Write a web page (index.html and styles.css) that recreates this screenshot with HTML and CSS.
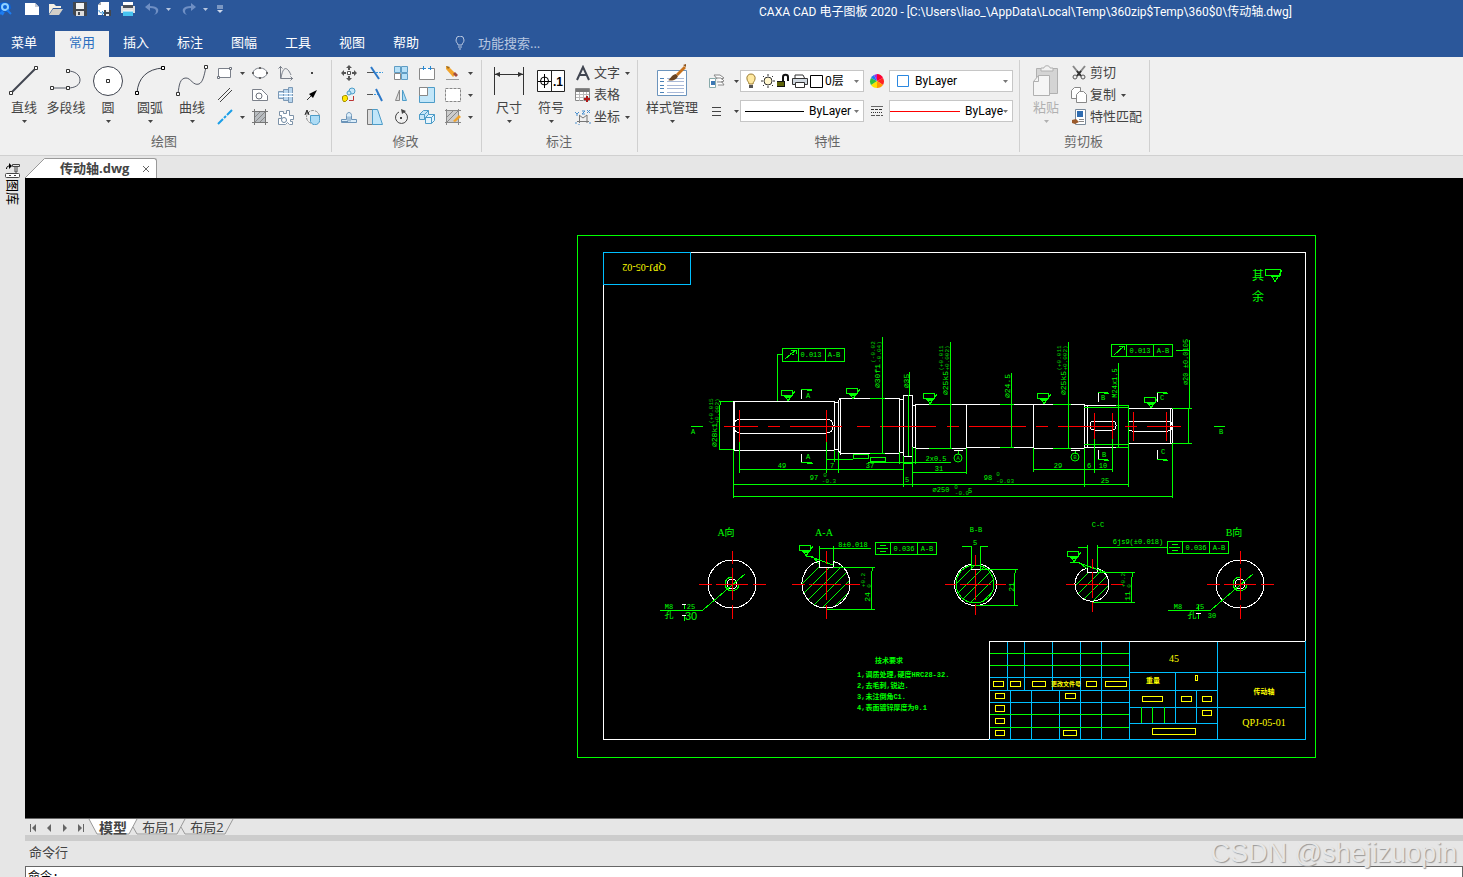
FILE: index.html
```
<!DOCTYPE html>
<html lang="zh-CN">
<head>
<meta charset="utf-8">
<title>CAXA CAD 电子图板 2020</title>
<link rel="stylesheet" href="styles.css">
</head>
<body>
<svg class="defs" aria-hidden="true">
	<symbol id="down" viewBox="0 0 5 3"><path d="M0 0h5L2.5 3z" fill="currentColor"/></symbol>
	<symbol id="rough" viewBox="0 0 16 13" overflow="visible"><path d="M0 0h11v5h-11zM3 6h8M4 6l3 5 7-10M5 7h5" fill="none" stroke="#0f0"/></symbol>
	<pattern id="hatch" width="11" height="11" patternUnits="userSpaceOnUse"><path d="M-1 12L12-1" stroke="#0f0" shape-rendering="crispEdges"/></pattern>
</svg>

<header class="top">
	<div class="titlebar">
		<div class="quick">
			<svg class="logo" width="12" height="16" viewBox="4 0 12 16"><path d="M4 2l5-1 5 2 1 4-2 3-3 1-3-1-3 2z" fill="#0b62d8"/><circle cx="9" cy="6" r="3" fill="none" stroke="#8fd0ff" stroke-width="2"/><path d="M11 9l4 4M4 13l3-3M6 14l2-3" stroke="#1c7cf0" stroke-width="2"/></svg>
			<button aria-label="新建"><svg width="16" height="16"><path d="M1 2h10l4 4v8H1z" fill="#fff"/><path d="M11 2v4h4z" fill="#c8ccd4"/></svg></button>
			<button aria-label="打开"><svg width="16" height="16"><path d="M1 13V3h5l2 2h5v2H5z" fill="#f4efe4"/><path d="M1 14l4-6h10l-4 6z" fill="#d2cfc8"/></svg></button>
			<button aria-label="保存"><svg width="16" height="16"><path d="M1 1h14v14H3l-2-2z" fill="#42474f"/><path d="M4 2h8v6H4z" fill="#f2f2f2"/><path d="M4 10h8v5H4z" fill="#ddd"/><path d="M6 11h2v3H6z" fill="#42474f"/></svg></button>
			<button aria-label="另存为"><svg width="16" height="16"><path d="M2 4l3-3h8v13H2z" fill="#fff"/><path d="M2 4h3V1z" fill="#aaa"/><path d="M3 9c0 3 2 3 5 3M6 10l2 2-2 2" fill="none" stroke="#2f8bd0"/><path d="M8 9h7v6H8z" fill="#42474f"/><path d="M10 9h3v2h-3zM10 13h3v2h-3z" fill="#eee"/></svg></button>
			<button aria-label="打印"><svg width="16" height="16"><path d="M3 1h10v5H3z" fill="#fff"/><path d="M1 5h14v7H1z" fill="#e0e0e0"/><path d="M3 4h10v3H3z" fill="#4b5058"/><path d="M3 10h10v5H3z" fill="#48c3f0"/><path d="M3 10h10" stroke="#fff"/></svg></button>
			<button class="dim" aria-label="撤销"><svg width="16" height="16"><path d="M6 2L1 6l5 4V7c4 0 6 1 6 3s-1 3-2 4c3-1 5-3 4-6-1-2-4-3-8-3z" fill="currentColor"/></svg></button>
			<svg class="arr" width="5" height="3"><use href="#down"/></svg>
			<button class="dim" aria-label="重做"><svg width="16" height="16"><path d="M10 2l5 4-5 4V7c-4 0-6 1-6 3s1 3 2 4c-3-1-5-3-4-6 1-2 4-3 8-3z" fill="currentColor"/></svg></button>
			<svg class="arr" width="5" height="3"><use href="#down"/></svg>
			<svg class="custom" width="6" height="8"><path d="M0 1h6M0 3h6" stroke="#cdd8ea"/><path d="M0 5h6L3 8z" fill="#cdd8ea"/></svg>
		</div>
		<h1>CAXA CAD 电子图板 2020 - [C:\Users\liao_\AppData\Local\Temp\360zip$Temp\360$0\传动轴.dwg]</h1>
	</div>
	<nav class="menu">
		<a class="first" href="#">菜单</a>
		<a class="select" href="#">常用</a>
		<a href="#">插入</a>
		<a href="#">标注</a>
		<a href="#">图幅</a>
		<a href="#">工具</a>
		<a href="#">视图</a>
		<a href="#">帮助</a>
		<label class="search">
			<svg width="10" height="14"><path d="M3 9c0-2-2-2-2-5a4 4 0 0 1 8 0c0 3-2 3-2 5zM3 11h4M4 13h2" fill="none" stroke="#b8c7e0"/></svg>
			<input type="text" placeholder="功能搜索..." aria-label="功能搜索">
		</label>
	</nav>
</header>

<div class="ribbon">
	<!-- 绘图 -->
	<section class="group draw">
		<div class="tools">
			<button class="big"><svg width="32" height="34"><path d="M3 29L28 4" stroke="#404550" stroke-width="2"/><path d="M1.500 27.500h3v3h-3zM26.500 2.500h3v3h-3z" fill="#fff" stroke="#333"/></svg><span>直线</span><svg class="arr" width="5" height="3"><use href="#down"/></svg></button>
			<button class="big"><svg width="32" height="34"><path d="M2 24h16c7 0 12-3 12-8s-5-9-12-9" fill="none" stroke="#555a66"/><path d="M.5 22.500h3v3h-3zM16.500 22.500h3v3h-3zM16.500 5.500h3v3h-3z" fill="#fff" stroke="#333"/></svg><span>多段线</span></button>
			<button class="big"><svg width="32" height="34"><circle cx="16" cy="17" r="14.500" fill="#fff" stroke="#404550"/><path d="M14.500 15.500h3v3h-3z" fill="#fff" stroke="#333"/></svg><span>圆</span><svg class="arr" width="5" height="3"><use href="#down"/></svg></button>
			<button class="big"><svg width="32" height="34"><path d="M3 29C4 14 13 5 29 4" fill="none" stroke="#404550"/><path d="M1.500 27.500h3v3h-3zM27.500 2.500h3v3h-3z" fill="#fff" stroke="#000"/></svg><span>圆弧</span><svg class="arr" width="5" height="3"><use href="#down"/></svg></button>
			<button class="big"><svg width="32" height="34"><path d="M2 30c1-9 2-16 8-16 5 0 7 8 13 6 4-2 5-8 7-17" fill="none" stroke="#555a66"/><path d="M.5 28.500h3v3h-3zM28.500 1.500h3v3h-3z" fill="#fff" stroke="#333"/></svg><span>曲线</span><svg class="arr" width="5" height="3"><use href="#down"/></svg></button>
			<div class="small-grid">
				<button aria-label="矩形"><svg width="16" height="16"><path d="M1.500 3.500h12v9h-12z" fill="#fff" stroke="#7b808a"/><path d="M.5 11.500h2v2h-2zM12.500 2.500h2v2h-2z" fill="#fff" stroke="#6b707a"/></svg></button>
				<svg class="arr" width="5" height="3"><use href="#down"/></svg>
				<button aria-label="椭圆"><svg width="16" height="16"><ellipse cx="8" cy="8" rx="7" ry="5" fill="#fff" stroke="#7b808a"/><path d="M0 7h2v2H0zM14 7h2v2h-2zM7 2h2v2H7zM7 12h2v2H7z" fill="#666"/></svg></button>
				<button aria-label="公式曲线"><svg width="16" height="16"><path d="M2.500 1v12.500H15M.5 3.500l2-2 2 2M12.500 11.500l2 2-2 2M3 13C5 1 9 1 13 10" fill="none" stroke="#7b808a"/></svg></button>
				<button aria-label="点"><svg width="16" height="16"><path d="M7 7h2v2H7z" fill="#444"/></svg></button>

				<button aria-label="平行线"><svg width="16" height="16"><path d="M1 13L13 1M3 15L15 3" stroke="#444"/></svg></button>
				<i></i>
				<button aria-label="孔"><svg width="16" height="16"><path d="M.5 2.500h9l6 6v5H.5z" fill="#fff" stroke="#7b808a"/><circle cx="7" cy="9" r="3" fill="#fff" stroke="#6b707a"/></svg></button>
				<button aria-label="轴"><svg width="16" height="16"><path d="M.5 4.500h5v7h-5zM5.500 2.500h5v11h-5zM10.500 .5h4v15h-4z" fill="#b9d6ee" stroke="#7b98b5"/><path d="M1 6.500h14M1 9.500h14" stroke="#fff"/></svg></button>
				<button aria-label="箭头"><svg width="16" height="16"><path d="M3 13l5-5" stroke="#333"/><path d="M13 3L5 7l4 4z" fill="#000"/></svg></button>

				<button aria-label="中心线"><svg width="16" height="16"><path d="M1 15l5-5M7 9l2-2M10 6l5-5" stroke="#1b9fe8" stroke-width="2"/></svg></button>
				<svg class="arr" width="5" height="3"><use href="#down"/></svg>
				<button aria-label="剖面线"><svg width="16" height="16"><path d="M2.500 2.500h11v11h-11z" fill="#b8bcc0"/><path d="M2.500 0v16M13.500 0v16M0 2.500h16M0 13.500h16" stroke="#777"/><path d="M3 8l5-5M3 13L13 3M8 13l5-5" stroke="#888"/></svg></button>
				<button aria-label="齿轮"><svg width="16" height="16"><path d="M1.500 6.500v-4h4v2h3v-3h3v5h4v4h-3v2h2v3h-3l-2-2-2 2h-7v-6h3v-3z" fill="#fff" stroke="#7d92a8"/><circle cx="6" cy="11" r="2.500" fill="#fff" stroke="#6d87a0"/></svg></button>
				<button aria-label="局部放大"><svg width="16" height="16"><circle cx="9" cy="8" r="6.500" fill="none" stroke="#888" stroke-dasharray="3 1"/><path d="M6.500 6.500h9v3a4 4 0 0 1-9 3z" fill="#aedcf5" stroke="#4d9cc8"/><path d="M1 6l2-5 2 5M2 4h3" fill="none" stroke="#222"/></svg></button>
			</div>
		</div>
		<h2>绘图</h2>
	</section>

	<!-- 修改 -->
	<section class="group modify">
		<div class="tools">
			<div class="small-grid">
				<button aria-label="平移"><svg width="16" height="16"><path d="M6.500 6.500h3v3h-3z" fill="#fff" stroke="#555"/><path d="M7 2h2v3H7zM7 11h2v3H7zM2 7h3v2H2zM11 7h3v2h-3z" fill="#555"/><path d="M5 3l3-3 3 3zM5 13l3 3 3-3zM3 5L0 8l3 3zM13 5l3 3-3 3z" fill="#555"/></svg></button>
				<button aria-label="裁剪"><svg width="16" height="16"><path d="M0 7.500h8" stroke="#555"/><path d="M9 7.500h7" stroke="#3c9be0" stroke-dasharray="2 1"/><path d="M4 2l8 12" stroke="#2b78c8" stroke-width="2"/></svg></button>
				<button aria-label="阵列"><svg width="16" height="16"><path d="M1.500 1.500h6v6h-6zM8.500 1.500h6v6h-6zM8.500 8.500h6v6h-6z" fill="#b7e0f7" stroke="#5f9dc4"/><path d="M1.500 8.500h6v6h-6z" fill="#fff" stroke="#888"/></svg></button>
				<button aria-label="打断"><svg width="16" height="16"><path d="M5 3.500H.5v11h15v-11H11" fill="#fff" stroke="#888"/><path d="M4.500 1v4M11.500 1v4M3 3.500h4M9 3.500h4" stroke="#2b88d0"/></svg></button>
				<button aria-label="删除"><svg width="16" height="16"><path d="M1 1l3 1 7 7-3 3-7-8z" fill="#f2a42c"/><path d="M8 9l3 3 2-2-3-3z" fill="#a44b3c"/><path d="M1 1l2 3 2-2z" fill="#9a6a20"/><path d="M1 14.500h13" stroke="#999"/></svg></button>
				<svg class="arr" width="5" height="3"><use href="#down"/></svg>

				<button aria-label="平移复制"><svg width="16" height="16"><circle cx="11" cy="4" r="3" fill="#c7e6f8" stroke="#4a9cc8"/><circle cx="8" cy="6" r="2" fill="#c7e6f8" stroke="#4a9cc8"/><path d="M1.500 9.500l2-1h2l1 2v2l-2 2h-2l-1-2z" fill="#ffe800" stroke="#a08a00"/><path d="M8 13.500h4.500V9" fill="none" stroke="#b33"/></svg></button>
				<button aria-label="延伸"><svg width="16" height="16"><path d="M0 7.500h6" stroke="#555"/><path d="M7 7.500h5" stroke="#3c9be0" stroke-dasharray="2 1"/><path d="M9 2l6 12" stroke="#2b78c8" stroke-width="2"/></svg></button>
				<button aria-label="镜像"><svg width="16" height="16"><path d="M6.500 3v10.500h-4z" fill="#ddd" stroke="#888"/><path d="M9.500 3v10.500h4z" fill="#aedcf5" stroke="#4d9cc8"/></svg></button>
				<button aria-label="缩放"><svg width="16" height="16"><path d="M.5 .5h15v15H.5z" fill="#c2e6f9" stroke="#4d9cc8"/><path d="M.5 .5h8v8h-8z" fill="#fff" stroke="#888"/></svg></button>
				<button aria-label="拉伸"><svg width="16" height="16"><path d="M.5 1.500h15v13H.5z" fill="#fff" stroke="#888" stroke-dasharray="3 1"/></svg></button>
				<svg class="arr" width="5" height="3"><use href="#down"/></svg>

				<button aria-label="偏移"><svg width="16" height="16"><path d="M.5 13.500h15v-3h-5v-4c0-4-5-4-5 0v4h-5z" fill="#dceefa" stroke="#6c94b8"/><path d="M1 12.500h6v-5M9 7.500v5" fill="none" stroke="#6c94b8"/></svg></button>
				<button aria-label="拔模"><svg width="16" height="16"><path d="M.5 .5h9v15h-9z" fill="#ddd" stroke="#777"/><path d="M5.500 .5h5l5 15h-10z" fill="#c2e6f9" stroke="#4d9cc8"/></svg></button>
				<button aria-label="旋转"><svg width="16" height="16"><path d="M6 3a6 6 0 1 0 5 0" fill="none" stroke="#444"/><path d="M8 0l5 2-4 3z" fill="#444"/><path d="M7 8h2v2H7z" fill="#444"/></svg></button>
				<button aria-label="分解"><svg width="16" height="16"><path d="M.5 5.500l4-4h5v4l-4 5h-5zM.5 5.500h5v5M5.500 5.500l4-4" fill="#c7e6f8" stroke="#4d9cc8"/><path d="M6.500 8.500l3-3h6v6l-3 3h-6zM6.500 8.500h6v6M12.500 8.500l3-3" fill="#e4f4fd" stroke="#4d9cc8"/></svg></button>
				<button aria-label="编辑"><svg width="16" height="16"><path d="M1.500 1.500h12v12h-12z" fill="#ccc" stroke="#888"/><path d="M0 1.500h16M0 13.500h16M1.500 0v16M13.500 0v16M2 8l6-6M2 13L13 2" stroke="#888"/><path d="M8 12l6-6 2 2-6 5z" fill="#f0a32c"/></svg></button>
				<svg class="arr" width="5" height="3"><use href="#down"/></svg>
			</div>
		</div>
		<h2>修改</h2>
	</section>

	<!-- 标注 -->
	<section class="group note">
		<div class="tools">
			<button class="big"><svg width="32" height="34"><path d="M1.500 3v28M30.500 3v28M2 10.500h28" stroke="#333"/><path d="M2 10l5-2v5zM30 10l-5-2v5z" fill="#333"/></svg><span>尺寸</span><svg class="arr" width="5" height="3"><use href="#down"/></svg></button>
			<button class="big"><svg width="32" height="34"><path d="M2.500 6.500h27v21h-27zM16.500 7v20" fill="#fff" stroke="#222"/><circle cx="9.500" cy="17" r="4" fill="none" stroke="#000"/><path d="M3 17.500h13M9.500 10v14" stroke="#000"/><text class="sym" x="18" y="22">.1</text></svg><span>符号</span><svg class="arr" width="5" height="3"><use href="#down"/></svg></button>
			<div class="rows">
				<button class="row"><svg width="16" height="16"><path d="M2 15L8 2l6 13M5 10h6" fill="none" stroke="#404550" stroke-width="2"/></svg><span>文字</span><svg class="arr" width="5" height="3"><use href="#down"/></svg></button>
				<button class="row"><svg width="16" height="16"><path d="M.5 1.500h14v12H.5z" fill="#fff" stroke="#888"/><path d="M1 2h13v3H1z" fill="#777"/><path d="M1 7.500h13M1 10.500h13M4.500 5v9M8.500 5v9M11.500 5v9" stroke="#bbb"/><path d="M12 9v6M9 12h6" stroke="#b01818" stroke-width="2"/></svg><span>表格</span></button>
				<button class="row"><svg width="16" height="16"><path d="M4.500 6v8M2 12.500h12M4 6l4 3 4-3v8" fill="none" stroke="#777"/><path d="M0 3l2 2 2-2M2 5v2M7 2h3L7 5h3M12 1l3 3M15 1l-3 3M0 14h2M14 14h2M4 15v1" fill="none" stroke="#4a90d0"/></svg><span>坐标</span><svg class="arr" width="5" height="3"><use href="#down"/></svg></button>
			</div>
		</div>
		<h2>标注</h2>
	</section>

	<!-- 特性 -->
	<section class="group prop">
		<div class="tools">
			<button class="big wide"><svg width="32" height="34"><path d="M1.500 6.500h29v25h-29z" fill="#fff" stroke="#6c94bd"/><path d="M4 14.500h4M4 17.500h4M4 21.500h4M4 24.500h4M4 28.500h4" stroke="#4c83b8"/><path d="M11 14.500h17M11 17.500h17M11 21.500h17M11 24.500h17M11 28.500h17" stroke="#a9b9d8"/><path d="M12 16c2 0 3-5 8-6l2 2c-2 5-7 5-10 4z" fill="#6b4523"/><path d="M20 10l8-8 2 2-8 8z" fill="#c8721c"/><path d="M27 1l3-1v3z" fill="#8a5018"/></svg><span>样式管理</span><svg class="arr" width="5" height="3"><use href="#down"/></svg></button>
			<div class="props">
				<button aria-label="图层"><svg width="16" height="16"><path d="M.5 5.500h6v9h-6z" fill="#fff" stroke="#8aa"/><path d="M2 8h4v4H2z" fill="#3c78b4"/><path d="M5 2h6l4 3-3 1M7 5h5l3 3-3 1M8 9h5l2 3H9M5 2l3 4" fill="#fff" stroke="#888"/></svg></button>
				<svg class="arr" width="5" height="3"><use href="#down"/></svg>
				<div class="combo layer">
					<svg width="80" height="18" viewBox="0 0 80 18"><path d="M6 2a4 4 0 0 0-4 5c0 2 2 3 2 5h4c0-2 2-3 2-5a4 4 0 0 0-4-5z" fill="#ffe9a0" stroke="#9a7a30"/><path d="M4 13h4v3H4z" fill="#555"/><circle cx="23" cy="9" r="4" fill="#fff6cc" stroke="#333"/><path d="M23 2v2M23 14v2M16 9h2M28 9h2M18 4l1 1M27 13l1 1M28 4l-1 1M18 14l1-1" stroke="#333"/><path d="M32 9h8v6h-8z" fill="#111"/><path d="M32 11h7M32 13h7" stroke="#a8b400"/><path d="M38 9V5c0-3 5-3 5 0v4" fill="none" stroke="#111" stroke-width="2"/><path d="M50 7V3h8l2 4" fill="#fff" stroke="#333"/><path d="M47.500 6.500h15v6h-15z" fill="#d0d8e0" stroke="#333"/><path d="M50.500 10.500h9v5h-9z" fill="#fff" stroke="#333"/><path d="M65.500 3.500h12v12h-12z" fill="#fff" stroke="#000"/></svg>
					<select aria-label="当前图层"><option>0层</option></select>
					<svg class="arr" width="5" height="3"><use href="#down"/></svg>
				</div>
				<button aria-label="颜色"><svg width="16" height="16"><path d="M8 8V1a7 7 0 0 1 6 4z" fill="#f03"/><path d="M8 8l6-3a7 7 0 0 1 0 7z" fill="#f22"/><path d="M8 8l6 4a7 7 0 0 1-6 3z" fill="#ff9a00"/><path d="M8 8v7a7 7 0 0 1-6-3z" fill="#ffe000"/><path d="M8 8l-6 4a7 7 0 0 1 0-7z" fill="#2fc040"/><path d="M8 8L2 5a7 7 0 0 1 3-3z" fill="#1c7cf0"/><path d="M8 8L5 2l3-1z" fill="#a030e0"/></svg></button>
				<div class="combo color">
					<svg width="14" height="14"><path d="M1.500 1.500h11v11h-11z" fill="#fff" stroke="#2b88e0"/></svg>
					<select aria-label="颜色选择"><option>ByLayer</option></select>
					<svg class="arr" width="5" height="3"><use href="#down"/></svg>
				</div>

				<button aria-label="线宽"><svg width="16" height="16"><path d="M3 4.500h9M3 8.500h9M3 12.500h9" stroke="#444"/></svg></button>
				<svg class="arr" width="5" height="3"><use href="#down"/></svg>
				<div class="combo line">
					<svg width="59" height="1"><path d="M0 0h59v1H0z" fill="#000"/></svg>
					<select aria-label="线宽选择"><option>ByLayer</option></select>
					<svg class="arr" width="5" height="3"><use href="#down"/></svg>
				</div>
				<button aria-label="线型"><svg width="16" height="16"><path d="M2 3.500h12" stroke="#666"/><path d="M2 6.500h12" stroke="#333" stroke-dasharray="3 1"/><path d="M2 9.500h12" stroke="#333" stroke-dasharray="1 1"/><path d="M2 12.500h12" stroke="#555" stroke-dasharray="4 1"/></svg></button>
				<div class="combo type">
					<svg width="70" height="1"><path d="M0 0h70v1H0z" fill="#f00"/></svg>
					<select aria-label="线型选择"><option>ByLayer</option></select>
					<svg class="arr" width="5" height="3"><use href="#down"/></svg>
				</div>
			</div>
		</div>
		<h2>特性</h2>
	</section>

	<!-- 剪切板 -->
	<section class="group clip">
		<div class="tools">
			<button class="big" disabled><svg width="32" height="34"><path d="M6.500 4.500h21v25h-21z" fill="#d4d4d4" stroke="#b0b0b0"/><path d="M11 7V4h3c0-3 6-3 6 0h3v3z" fill="#f2f2f2" stroke="#b0b0b0"/><path d="M3.500 17.500l5-6h11v20h-16z" fill="#f5f5f5" stroke="#b0b0b0"/><path d="M3.500 17.500h5v-6" fill="none" stroke="#b0b0b0"/></svg><span>粘贴</span><svg class="arr" width="5" height="3"><use href="#down"/></svg></button>
			<div class="rows">
				<button class="row"><svg width="16" height="16"><path d="M2 1l8 10M14 1L6 11" stroke="#888" stroke-width="2"/><path d="M6 6l4 5M10 6l-4 5" stroke="#333" stroke-width="2"/><circle cx="4" cy="12" r="2" fill="none" stroke="#555"/><circle cx="12" cy="12" r="2" fill="none" stroke="#555"/></svg><span>剪切</span></button>
				<button class="row"><svg width="16" height="16"><path d="M.5 3.500l3-3h6v11h-9z" fill="#fff" stroke="#888"/><path d="M5.500 7.500l3-3h4l3 3v8h-10z" fill="#fff" stroke="#888"/></svg><span>复制</span><svg class="arr" width="5" height="3"><use href="#down"/></svg></button>
				<button class="row"><svg width="16" height="16"><path d="M4.500 .5h10v15h-10z" fill="#fff" stroke="#7a8a9a"/><path d="M6 2h6v6H6z" fill="#2f6cb0"/><path d="M8 10.500h5M8 12.500h5" stroke="#888"/><path d="M1 11l4-1 3 3-4 2-3-1z" fill="#9a5a2c"/></svg><span>特性匹配</span></button>
			</div>
		</div>
		<h2>剪切板</h2>
	</section>
</div>

<div class="work">
	<aside class="side">
		<svg width="15" height="16"><path d="M1.500 6c0-2 1-3 3-3" fill="none" stroke="#000"/><path d="M4 0l3 3-3 3z" fill="#000"/><path d="M7.500 1.500h7v2h-7zM10 4v5h2V4" fill="none" stroke="#444"/><rect x=".5" y="10.500" width="14" height="4" rx="1" fill="#fff" stroke="#444"/><path d="M4 12.500h2M9 12.500h2" stroke="#444"/></svg>
		<span>图库</span>
	</aside>
	<main class="main">
		<div class="files">
			<svg width="20" height="20"><path d="M0 20L19 1h1v19z" fill="#fff"/><path d="M0 20L19.500 .5h1" fill="none" stroke="#999"/></svg>
			<div class="file">
				<a href="#">传动轴.dwg</a>
				<button aria-label="关闭"><svg width="8" height="8"><path d="M1 1l6 6M7 1L1 7" stroke="#666"/></svg></button>
			</div>
		</div>

		<svg class="cad" viewBox="25 178 1438 640" aria-label="传动轴图纸">
			<!-- 图框 -->
			<path class="w" d="M603 739V252H1305V641M603 739H989M989 739V641H1305"/>
			<path class="g" d="M577 235H1315V757H577z"/>
			<path class="b" d="M603 252h87v32h-87z"/>
			<text class="y mid" transform="translate(644 267) rotate(180)">QPJ-05-02</text>
			<text class="cn" x="1258" y="277">其</text>
			<text class="cn" x="1258" y="298">余</text>
			<path class="g" d="M1265 269h15v6h-15zM1271 276h9M1272 276l3 6 7-12"/>

			<!-- 轴轮廓 -->
			<path class="w" d="M733 401V450M734 401H834V450H734zM834 402H838V449H834M838 402L840 398V453L838 450zM840 398H899V453H840M899 399H903V452H899M903 395H912V456H903zM912 405H915V447H912M915 404H1084V448H1033V404M915 404V448H966V404M966 447H1033M1084 405H1128V447H1084zM1087 405V447M1128 408H1172V443H1128zM1170 408V443"/>
			<rect class="w" x="734" y="419" width="99" height="14" rx="6"/>
			<rect class="w" x="1090" y="421" width="26" height="9" rx="4"/>
			<rect class="w" x="1128" y="421" width="44" height="10" rx="4"/>
			<path class="g" d="M1084 407H1128M1084 444H1128M1116 405H1128V447H1116M870 398h15M870 453h15M929 404h23M929 448h23M1000 404h14M1000 447h14M1053 404h18M1053 448h18"/>
			<path class="r" d="M724 426H758M768 426H780M790 426H842M857 426H870M880 426H936M947 426H959M969 426H1026M1036 426H1048M1058 426H1114M1125 426H1137M1147 426H1181M739 410V442M826 410V442M1094 413V439M1112 413V439M1133 412V441M1166 412V441"/>

			<!-- 长度尺寸 -->
			<path class="g" d="M733 450V498M739 442V473M826 442V473M834 450V462M838 452V473M899 452V464M903 456V487M912 447V487M915 448V464M966 448V474M1033 448V472M1084 448V487M1094 439V473M1112 439V472M1128 447V487M1172 443V498"/>
			<path class="g" d="M739 470l4-1H822l4 1 4-1h4l4 1 4-1H900l3 1M826 459l4 1 4-1 5 1 4-1H853M853 454h15v4h-15zM870 457h15v4h-15zM868 462H895l4 1 4-1H951M903 463h9M912 473l4-1H962l4 1M1033 470l3-1H1081l3 1M1084 469H1094l3 1 3-1H1108l4 1M733 484H1128M733 497l4-1H1168l4 1"/>
			<text x="782" y="466">49</text><text x="832" y="466">7</text><text x="870" y="466">37</text>
			<text x="814" y="478">97</text><text class="tol" x="825" y="475">0</text><text class="tol" x="829" y="481">-0.3</text>
			<text x="907" y="480">5</text><text x="936" y="459">2x0.5</text><text x="939" y="469">31</text>
			<text x="988" y="478">98</text><text class="tol" x="998" y="474">0</text><text class="tol" x="1005" y="481">-0.03</text>
			<text x="1058" y="466">29</text><text x="1089" y="466">6</text><text x="1103" y="466">10</text><text x="1105" y="481">25</text>
			<text x="941" y="490">⌀250</text><text class="tol" x="956" y="487">0</text><text class="tol" x="962" y="493">-0.0</text><text x="970" y="491">5</text>

			<!-- 直径尺寸 -->
			<path class="g" d="M719 401H733M719 449H733M720 401V405L719 406V443L720 449M882 337V453M909 372V395L908 398V452L909 456M950 342V448M1011 373V447M1068 342V448M1118 363V447M1189 340V408L1188 412V437L1189 443M1172 408H1192M1172 443H1192M1176 350H1189"/>
			<text class="dia" transform="translate(714 435) rotate(-90)">⌀28k1</text>
			<text class="tol" transform="translate(711 411) rotate(-90)">(+0.015</text>
			<text class="tol" transform="translate(717 411) rotate(-90)">+0.002)</text>
			<text class="dia" transform="translate(877 376) rotate(-90)">⌀30f1</text>
			<text class="tol" transform="translate(873 352) rotate(-90)">(-0.02</text>
			<text class="tol" transform="translate(879 352) rotate(-90)">-0.04)</text>
			<text class="dia" transform="translate(906 381) rotate(-90)">⌀35</text>
			<text class="dia" transform="translate(945 383) rotate(-90)">⌀25k5</text>
			<text class="tol" transform="translate(941 358) rotate(-90)">(+0.011</text>
			<text class="tol" transform="translate(947 358) rotate(-90)">+0.002)</text>
			<text class="dia" transform="translate(1007 386) rotate(-90)">⌀24.5</text>
			<text class="dia" transform="translate(1063 383) rotate(-90)">⌀25k5</text>
			<text class="tol" transform="translate(1059 358) rotate(-90)">(+0.011</text>
			<text class="tol" transform="translate(1065 358) rotate(-90)">+0.002)</text>
			<text transform="translate(1115 383) rotate(-90)">M24x1.5</text>
			<text transform="translate(1186 362) rotate(-90)">⌀20 ±0.0105</text>

			<!-- 形位公差 -->
			<path class="g" d="M782 348h62v13h-62zM798 348v13M825 348v13M782 354h-5V401M1111 344h61v12h-61zM1126 344v12M1153 344v12M875 542h61v12h-61zM890 542v12M917 542v12M1167 541h61v12h-61zM1182 541v12M1209 541v12"/>
			<path class="g" d="M785 359l11-9M791 350h5v4M790 353l4 2M1114 355l10-9M1119 346h5v4M880 545h6M877 548h11M880 551h6M1172 544h6M1169 547h11M1172 550h6"/>
			<text x="811" y="355">0.013</text><text x="834" y="355">A-B</text>
			<text x="1140" y="351">0.013</text><text x="1163" y="351">A-B</text>
			<text x="904" y="549">0.036</text><text x="927" y="549">A-B</text>
			<text x="1196" y="548">0.036</text><text x="1219" y="548">A-B</text>

			<!-- 粗糙度 -->
			<use href="#rough" x="781" y="390" width="16" height="13"/>
			<use href="#rough" x="846" y="388" width="16" height="13"/>
			<use href="#rough" x="923" y="393" width="16" height="13"/>
			<use href="#rough" x="1037" y="393" width="16" height="13"/>
			<use href="#rough" x="1144" y="397" width="16" height="13"/>
			<use href="#rough" x="799" y="545" width="16" height="13"/>
			<use href="#rough" x="1067" y="551" width="16" height="13"/>

			<!-- 剖切符号 -->
			<path class="w" d="M801 389V399M801 454V463M1098 392V402M1098 450V460M1157 392V402M1157 450V460M954 450h9M1071 450h9"/>
			<path class="g" d="M801 389h11M807 390h5M801 462h11M807 463h6M1098 392h10M1104 393h5M1098 459h10M1104 460h5M1157 392h10M1163 393h5M1157 459h10M1163 460h5M691 426h12M1214 426h11M958 451v3M1075 451v3"/>
			<circle class="g datum" cx="958" cy="458" r="4"/><circle class="g datum" cx="1075" cy="457" r="4"/>
			<text x="808" y="396">A</text><text x="808" y="457">A</text><text x="693" y="432">A</text><text x="1221" y="432">B</text>
			<text x="1103" y="398">B</text><text x="1104" y="455">B</text><text x="1162" y="398">C</text><text x="1163" y="452">C</text>
			<text class="tol" x="958" y="458">A</text><text class="tol" x="1075" y="457">B</text>

			<!-- A向 -->
			<text class="view" x="726" y="532">A向</text>
			<circle class="w" cx="732" cy="584" r="24"/><circle class="w" cx="732" cy="584" r="5"/>
			<path class="g" d="M739 584a7 7 0 1 1-7-7M745 574L703 610H660"/>
			<path class="r" d="M699 584h13M716 584h32M753 584h13M732 551v13M732 568v32M732 605v14"/>
			<text x="669" y="607">M8</text><text x="691" y="607">25</text><text class="kong" x="669" y="616">孔</text><text class="big30" x="691" y="616">30</text>
			<path class="w" d="M682 604h4M682 615h4"/><path class="g" d="M684 605v4M684 616v5"/>

			<!-- A-A -->
			<text class="view" x="824" y="532">A-A</text>
			<path class="hatch" d="M819 567h14v-6a24 24 0 1 1-14 0z"/>
			<path class="w" d="M819 561v6h14v-6a24 24 0 1 1-14 0"/>
			<path class="g" d="M819 546V561M833 546V561M819 549l3-1h8l3 1M833 548H871M833 567H875M826 609H875M872 567V571L871 573V604L872 609M806 556H812L819 564M811 557L833 565"/>
			<path class="r" d="M792 584h13M809 584h32M845 584h15M826 551v13M826 568v32M826 605v14"/>
			<text x="853" y="545">8±0.018</text>
			<text class="dia" transform="translate(867 597) rotate(-90)">24</text>
			<text class="tol" transform="translate(863 580) rotate(-90)">+0.2</text><text class="tol" transform="translate(869 586) rotate(-90)">0</text>

			<!-- B-B -->
			<text x="976" y="530">B-B</text>
			<circle class="hatch" cx="975" cy="584" r="19"/>
			<circle class="g" cx="975" cy="584" r="19"/>
			<path class="w" d="M971 564v5h9v-5a21 21 0 1 1-9 0"/>
			<path class="g" d="M962 546l5 1 4-1M980 546h8M971 546V569M980 546V569M980 569H1018M975 605H1018M1015 569V573L1014 575V599L1015 605"/>
			<path class="r" d="M945 584h11M960 584h31M995 584h11M975 555v11M975 570v30M975 604v11"/>
			<text x="975" y="543">5</text>
			<text class="dia" transform="translate(1011 587) rotate(-90)">21</text>

			<!-- C-C -->
			<text x="1098" y="525">C-C</text>
			<path class="hatch" d="M1087 572h10v-4a17 17 0 1 1-10 0z"/>
			<path class="w" d="M1087 568v4h10v-4a17 17 0 1 1-10 0"/>
			<path class="g" d="M1078 547h5l4 1M1087 545V568M1097 545V568M1097 548l5-1H1167M1097 572H1135M1092 602H1135M1132 572V577L1131 579V597L1132 602M1070 562H1079L1087 569M1079 563L1105 572"/>
			<path class="r" d="M1066 584h9M1079 584h28M1111 584h12M1092 559v10M1092 572v26M1092 602v10"/>
			<text x="1138" y="542">6js9(±0.018)</text>
			<text class="dia" transform="translate(1127 596) rotate(-90)">11</text>
			<text class="tol" transform="translate(1123 580) rotate(-90)">+0.2</text><text class="tol" transform="translate(1129 586) rotate(-90)">0</text>

			<!-- B向 -->
			<text class="view" x="1234" y="532">B向</text>
			<circle class="w" cx="1240" cy="584" r="24"/><circle class="w" cx="1240" cy="584" r="5"/>
			<path class="g" d="M1247 584a7 7 0 1 1-7-7M1253 574L1211 610H1168"/>
			<path class="r" d="M1207 584h13M1224 584h32M1261 584h13M1240 551v13M1240 568v32M1240 605v14"/>
			<text x="1178" y="607">M8</text><text x="1200" y="607">25</text><text class="kong" x="1192" y="616">孔</text><text x="1212" y="616">30</text>
			<path class="w" d="M1196 613h5"/><path class="g" d="M1198 614v5M1198 605v5"/>

			<!-- 技术要求 -->
			<text class="req" x="889" y="661">技术要求</text>
			<text class="req start" x="857" y="675">1,调质处理,硬度HRC28-32.</text>
			<text class="req start" x="857" y="686">2,去毛刺,锐边.</text>
			<text class="req start" x="857" y="697">3,未注倒角C1.</text>
			<text class="req start" x="857" y="708">4,表面镀锌厚度为0.1</text>

			<!-- 标题栏 -->
			<path class="b" d="M990 677H1129M990 690H1217M990 702H1129M989 739H1305V641M1007 642V690M1024 642V690M1052 642V690M1080 642V739M1101 642V739M1010 690V739M1031 690V739M1059 690V739M1129 642V739M1217 642V739M1129 672H1305M1129 707H1305M1129 723H1217M1175 672V723M1196 690V723"/>
			<path class="g" d="M990 653H1129M990 665H1129M990 714H1129M990 727H1129M1141 707V723M1152 707V723M1164 707V723"/>
			<path class="yl" d="M993 681h10v5h-10zM1010 681h10v5h-10zM1032 681h13v5h-13zM1086 681h10v5h-10zM1105 681h21v5h-21zM995 693h9v5h-9zM995 705h9v6h-9zM995 718h9v5h-9zM995 730h9v5h-9zM1065 693h10v5h-10zM1063 730h13v5h-13zM1142 696h20v5h-20zM1181 696h10v5h-10zM1202 696h9v5h-9zM1202 710h9v5h-9zM1152 728h43v6h-43zM1195 675h2v5h-2z"/>
			<text class="y tiny" x="1066" y="684">更改文件号</text>
			<text class="y req" x="1153" y="681">重量</text>
			<text class="y mid" x="1174" y="658">45</text>
			<text class="y req" x="1264" y="692">传动轴</text>
			<text class="y mid" x="1264" y="722">QPJ-05-01</text>
		</svg>

		<div class="layouts">
			<button class="nav" aria-label="第一页"><svg width="8" height="8"><path d="M1.500 0v8" stroke="#666"/><path d="M7 0v8L3 4z" fill="#666"/></svg></button>
			<button class="nav" aria-label="上一页"><svg width="8" height="8"><path d="M6 0v8L2 4z" fill="#666"/></svg></button>
			<button class="nav" aria-label="下一页"><svg width="8" height="8"><path d="M2 0v8l4-4z" fill="#666"/></svg></button>
			<button class="nav" aria-label="最后一页"><svg width="8" height="8"><path d="M1 0v8l4-4z" fill="#666"/><path d="M6.500 0v8" stroke="#666"/></svg></button>
			<button class="sheet select"><svg viewBox="0 0 48 16" preserveAspectRatio="none"><path d="M0 0l8 15h32l8-15" fill="#fff" stroke="#999"/></svg><span>模型</span></button>
			<button class="sheet"><svg viewBox="0 0 48 16" preserveAspectRatio="none"><path d="M-4 8l4 7h40l8-15" fill="none" stroke="#999"/></svg><span>布局1</span></button>
			<button class="sheet"><svg viewBox="0 0 48 16" preserveAspectRatio="none"><path d="M-4 8l4 7h40l8-15" fill="none" stroke="#999"/></svg><span>布局2</span></button>
		</div>
		<div class="command">
			<label for="cmd">命令行</label>
			<input id="cmd" type="text" value="命令:">
			<div class="mark">CSDN @shejizuopin</div>
		</div>
	</main>
</div>
</body>
</html>
```
FILE: styles.css
```
*{
	box-sizing: border-box;
	padding: 0;
	margin: 0;
}
body {
	display: flex;
	flex-direction: column;
	height: 100vh;
	overflow: hidden;
	background: #e6e6e6;
	color: #444;
	font: 13px/18px "Open Sans","Noto Sans CJK SC",sans-serif;
}
button {
	border: 0;
	background: none;
	color: inherit;
	font: inherit;
}
a {
	color: inherit;
	text-decoration: none;
}
svg {
	display: block;
	flex: none;
}
.defs {
	position: absolute;
	width: 0;
	height: 0;
}
/*标题栏*/
.top {
	background: #2b579a;
	color: #fff;
}
.titlebar {
	display: flex;
	height: 31px;
}
.quick {
	display: flex;
	align-items: center;
	height: 18px;
}
.quick .logo {
	margin-right: 12px;
}
.quick button {
	margin-right: 8px;
}
.quick .dim {
	margin: 0 6px 0 0;
	color: #6f8fc4;
}
.quick .arr {
	margin-right: 10px;
	color: #b8c7e0;
}
.quick .custom {
	margin-left: -1px;
}
.titlebar h1 {
	margin-left: 536px;
	font: 12px/24px Roboto,"Noto Sans CJK SC",sans-serif;
	white-space: nowrap;
}
.menu {
	display: flex;
	height: 26px;
	line-height: 22px;
}
.menu a {
	width: 54px;
	text-align: center;
}
.menu .first {
	width: 48px;
	margin-right: 7px;
}
.menu .select {
	background: #f0f0f0;
	color: #2b6fc0;
}
.menu .search {
	display: flex;
	align-items: center;
	gap: 13px;
	height: 23px;
	margin-left: 22px;
}
.search input {
	width: 120px;
	border: 0;
	background: none;
	color: #fff;
	font: inherit;
}
.search input::placeholder {
	color: #b8c7e0;
}
/*功能区*/
.ribbon {
	display: flex;
	height: 99px;
	padding: 3px 0;
	background: #f0f0f0;
	border-bottom: 1px solid #d0d0d0;
}
.group {
	display: flex;
	flex-direction: column;
	padding: 2px 6px 0 3px;
	border-right: 1px solid #d0d0d0;
}
.group h2 {
	color: #666;
	font-size: 13px;
	font-weight: normal;
	line-height: 22px;
	text-align: center;
}
.tools {
	display: flex;
	height: 69px;
}
.big {
	display: flex;
	flex-direction: column;
	align-items: center;
	justify-content: flex-start;
	width: 42px;
	padding-top: 2px;
	line-height: 18px;
	white-space: nowrap;
}
.big span {
	margin: 0 0 4px;
}
.big.wide {
	width: 60px;
}
.big:disabled {
	color: #b0b0b0;
}
.sym {
	font: bold 12px "Liberation Sans",sans-serif;
}
.small-grid {
	display: grid;
	grid-template-rows: repeat(3,22px);
	align-items: center;
	justify-items: center;
}
.draw .small-grid {
	grid-template-columns: 24px 10px 26px 26px 26px;
}
.modify {
	padding-left: 4px;
}
.modify .small-grid {
	grid-template-columns: repeat(5,26px) 9px;
}
.note {
	padding-left: 6px;
	padding-right: 7px;
}
.row {
	display: flex;
	align-items: center;
	gap: 3px;
	height: 22px;
	white-space: nowrap;
}
.row span {
	padding-bottom: 2px;
}
.row .arr {
	margin-left: 2px;
}
.note .rows {
	padding-left: 3px;
}
.prop {
	padding-left: 4px;
}
.props {
	display: grid;
	grid-template-columns: 30px 8px 124px 25px 124px;
	grid-template-rows: 22px 22px;
	gap: 8px 0;
	align-items: center;
	justify-items: center;
	padding: 8px 0;
}
.combo {
	display: flex;
	align-items: center;
	width: 124px;
	height: 22px;
	padding: 0 4px;
	background: #fff;
	border: 1px solid #c6c6c6;
}
.combo select {
	flex: 1;
	min-width: 0;
	margin-left: 5px;
	border: 0;
	appearance: none;
	background: none;
	color: #000;
	font: 12px/18px Roboto,"Noto Sans CJK SC",sans-serif;
	text-overflow: clip;
}
.combo .arr {
	color: #777;
}
.combo.layer select {
	margin-left: 0;
}
.combo.color {
	padding-left: 6px;
}
.combo.type {
	padding-left: 0;
}
.clip {
	padding-left: 5px;
	padding-right: 7px;
}
.clip .rows {
	padding-left: 4px;
}
/*工作区*/
.work {
	display: flex;
	flex: 1;
	min-height: 0;
}
.side {
	display: flex;
	flex-direction: column;
	align-items: center;
	width: 25px;
	padding-top: 7px;
	color: #000;
}
.side span {
	writing-mode: vertical-rl;
	text-orientation: sideways;
	line-height: 14px;
}
.main {
	display: flex;
	flex: 1;
	flex-direction: column;
	min-width: 0;
}
.files {
	display: flex;
	align-items: flex-end;
	height: 22px;
}
.file {
	display: flex;
	align-items: center;
	gap: 13px;
	height: 20px;
	padding: 0 6px 0 15px;
	background: #fff;
	border: 1px solid #999;
	border-width: 1px 1px 0 0;
	border-radius: 0 3px 0 0;
	font-weight: bold;
}
.file a {
	padding-bottom: 2px;
}
.cad {
	flex: 1;
	width: 100%;
	min-height: 0;
	background: #000;
	shape-rendering: crispEdges;
}
.cad path,.cad rect,.cad circle {
	fill: none;
}
.cad .g {
	stroke: #0f0;
}
.cad .w {
	stroke: #fff;
}
.cad .r {
	stroke: #f00;
}
.cad .b {
	stroke: #00bfff;
}
.cad .yl {
	stroke: #ff0;
}
.cad .hatch {
	fill: url(#hatch);
}
.cad .datum {
	shape-rendering: auto;
}
.cad text {
	fill: #0f0;
	font: 7px "Liberation Mono","Noto Sans CJK SC",monospace;
	text-anchor: middle;
	dominant-baseline: central;
}
.cad .dia {
	font-size: 8px;
}
.cad .tol {
	fill: #00d000;
	font-size: 6px;
}
.cad .y {
	fill: #ff0;
}
.cad .mid,.cad .view {
	font: 10px "Liberation Serif","Noto Sans CJK SC",serif;
}
.cad .cn {
	font-size: 12px;
}
.cad .kong {
	font-size: 9px;
}
.cad .big30 {
	font: 11px "Liberation Sans",sans-serif;
}
.cad .req {
	font-weight: bold;
}
.cad .tiny {
	font-size: 6px;
	font-weight: bold;
}
.cad .start {
	text-anchor: start;
}
/*布局页签*/
.layouts {
	display: flex;
	align-items: flex-start;
	height: 23px;
	border-top: 1px solid #666;
	border-bottom: 6px solid #ccc;
}
.nav {
	display: flex;
	align-items: center;
	justify-content: center;
	width: 16px;
	height: 17px;
}
.sheet {
	position: relative;
	width: 48px;
	height: 16px;
	padding-right: 4px;
	line-height: 13px;
}
.sheet svg {
	position: absolute;
	top: 0;
	left: 0;
	width: 100%;
	height: 100%;
	overflow: visible;
}
.sheet span {
	position: relative;
	display: block;
}
.sheet.select {
	padding-right: 0;
	font-size: 14px;
	font-weight: bold;
}
/*命令行*/
.command {
	position: relative;
	display: flex;
	flex-direction: column;
	height: 36px;
}
.command label {
	flex: none;
	padding: 0 0 3px 4px;
	line-height: 22px;
}
.command input {
	flex: none;
	height: 20px;
	padding-left: 2px;
	background: #fff;
	border: 1px solid #666;
	color: #000;
	font: 12px "Liberation Mono","Noto Sans CJK SC",monospace;
}
.mark {
	position: absolute;
	top: -4px;
	right: 6px;
	color: #e6e6e6;
	font: 27px/32px "Liberation Sans",sans-serif;
	text-shadow: 1px 1px 1px #999;
	white-space: nowrap;
}
```
